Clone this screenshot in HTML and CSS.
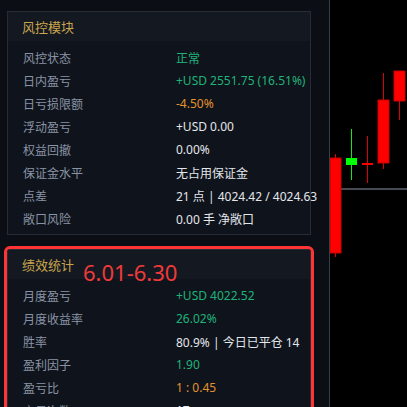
FILE: index.html
```html
<!DOCTYPE html>
<html lang="zh-CN">
<head>
    <meta charset="UTF-8">
    <meta name="viewport" content="width=device-width, initial-scale=1.0">
    <title>风控面板</title>
    <link rel="stylesheet" href="styles.css">
</head>
<body>
    <div class="screen">
        <aside class="sidebar">
            <section class="panel">
                <header class="panel-head"><h3>风控模块</h3></header>
                <dl class="rows">
                    <div class="row"><dt>风控状态</dt><dd class="up">正常</dd></div>
                    <div class="row"><dt>日内盈亏</dt><dd class="up">+USD 2551.75 (16.51%)</dd></div>
                    <div class="row"><dt>日亏损限额</dt><dd class="warn">-4.50%</dd></div>
                    <div class="row"><dt>浮动盈亏</dt><dd>+USD 0.00</dd></div>
                    <div class="row"><dt>权益回撤</dt><dd>0.00%</dd></div>
                    <div class="row"><dt>保证金水平</dt><dd>无占用保证金</dd></div>
                    <div class="row"><dt>点差</dt><dd>21 点 | 4024.42 / 4024.63</dd></div>
                    <div class="row"><dt>敞口风险</dt><dd>0.00 手 净敞口</dd></div>
                </dl>
            </section>

            <section class="panel panel-marked">
                <header class="panel-head"><h3>绩效统计</h3></header>
                <span class="period">6.01-6.30</span>
                <dl class="rows">
                    <div class="row"><dt>月度盈亏</dt><dd class="up">+USD 4022.52</dd></div>
                    <div class="row"><dt>月度收益率</dt><dd class="up">26.02%</dd></div>
                    <div class="row"><dt>胜率</dt><dd>80.9% | 今日已平仓 14</dd></div>
                    <div class="row"><dt>盈利因子</dt><dd class="up">1.90</dd></div>
                    <div class="row"><dt>盈亏比</dt><dd class="warn">1 : 0.45</dd></div>
                    <div class="row"><dt>交易次数</dt><dd>17</dd></div>
                </dl>
            </section>
        </aside>

        <div class="chart">
            <svg width="77" height="407" viewBox="0 0 77 407">
                <rect x="0" y="188" width="77" height="2" fill="#464a52"/>
                <!-- candles -->
                <rect x="5" y="154" width="1" height="103" fill="#e00000"/>
                <rect x="0" y="158" width="11" height="95" fill="#ff0000" stroke="#c80000" stroke-width="1"/>

                <rect x="21" y="129" width="1" height="51" fill="#1ee01e"/>
                <rect x="16" y="158" width="11" height="7" fill="#00ff00"/>

                <rect x="37" y="136" width="1" height="47" fill="#e00000"/>
                <rect x="32" y="163" width="11" height="2" fill="#ff0000"/>

                <rect x="53" y="73" width="1" height="96" fill="#e00000"/>
                <rect x="48" y="100" width="11" height="63" fill="#ff0000" stroke="#c80000" stroke-width="1"/>

                <rect x="69" y="71" width="1" height="49" fill="#e00000"/>
                <rect x="64" y="71" width="11" height="30" fill="#ff0000" stroke="#c80000" stroke-width="1"/>
            </svg>
        </div>
    </div>
</body>
</html>
```

FILE: styles.css
```css
/* Reset */
* {
    margin: 0;
    padding: 0;
    box-sizing: border-box;
}

body {
    font-family: "Noto Sans", "Noto Sans CJK SC", sans-serif;
    background-color: #000;
    width: 407px;
    height: 407px;
    overflow: hidden;
}

.screen {
    display: flex;
    height: 407px;
}

/* Left side panels */
.sidebar {
    width: 330px;
    flex: 0 0 330px;
    background-color: #0b0e14;
    border-right: 1px solid #3a3e46;
    padding: 11px 18px 0 7px;
}

.panel {
    position: relative;
    background-color: #0f131b;
    border: 1px solid #262b35;
    margin-bottom: 14px;
}

.panel-marked {
    outline: 3px solid #ff3535;
    outline-offset: 0;
    border-radius: 3px;
}

.panel-head {
    height: 29px;
    padding: 2px 0 0 14px;
    background-color: #131821;
}

.panel-head h3 {
    font-size: 13px;
    font-weight: normal;
    line-height: 27px;
    color: #c9a54c;
}

.period {
    position: absolute;
    left: 75px;
    top: 9px;
    font-size: 22px;
    line-height: 26px;
    color: #f03a3a;
}

.rows {
    padding: 5px 0 4px 15px;
}

.row {
    display: grid;
    grid-template-columns: 153px 1fr;
    height: 23px;
    align-items: center;
    font-size: 12px;
    white-space: nowrap;
}

.row dt {
    color: #8a93a5;
}

.row dd {
    color: #e3e6eb;
}

.row dd.up {
    color: #1fb37a;
}

.row dd.warn {
    color: #e2922e;
}

/* Chart */
.chart {
    flex: 1;
    background-color: #000;
}

.chart svg {
    display: block;
}
```
